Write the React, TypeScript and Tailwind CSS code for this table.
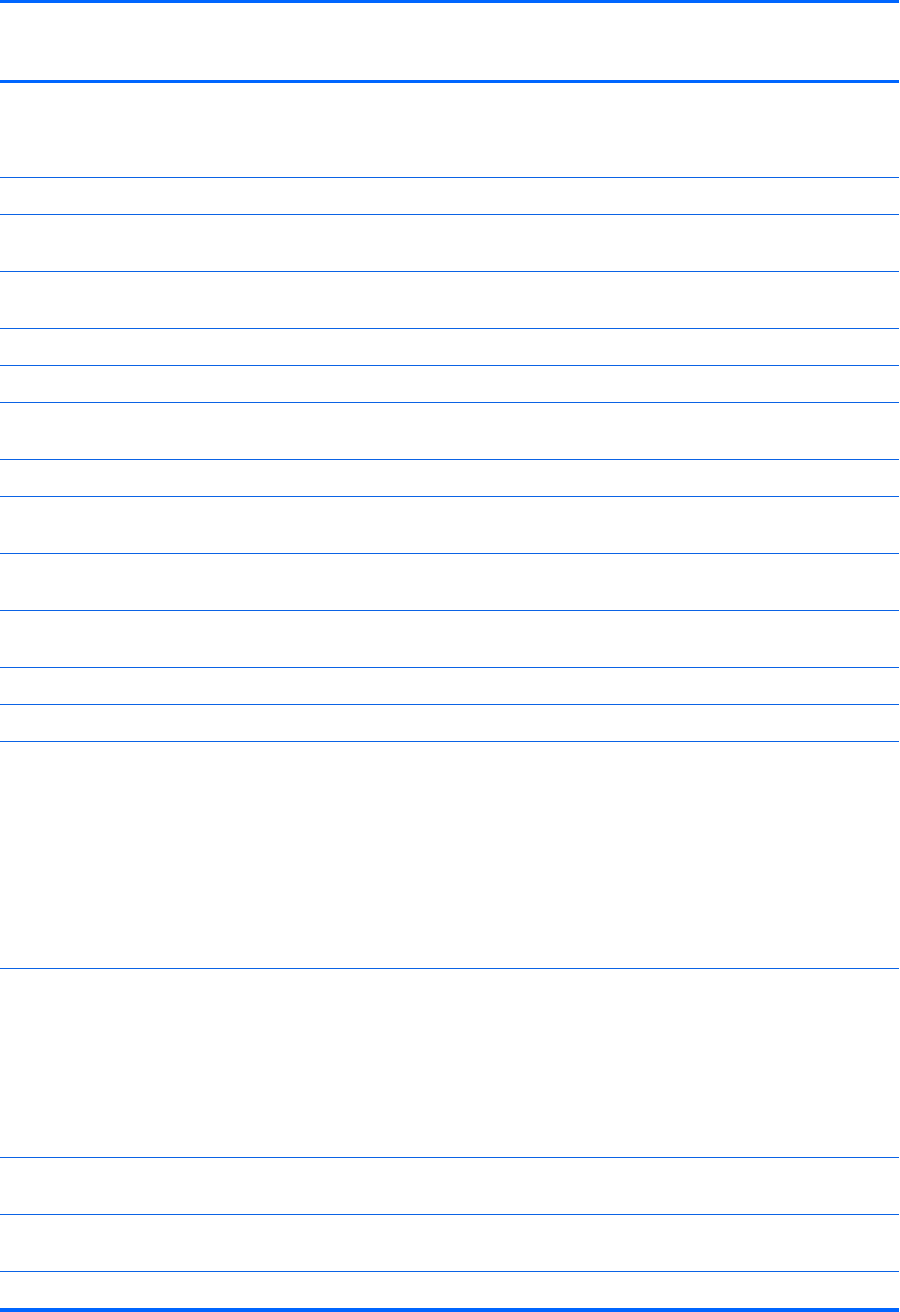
const rowHeights = [95, 37, 57, 57, 37, 37, 57, 37, 57, 57, 57, 37, 37, 227, 189, 57, 57, 36];

export default function App() {
  return (
    <div className="min-h-screen bg-white font-['Liberation_Sans',Arial,sans-serif]">
      <div className="w-[899px] border-t-[3px] border-b-4 border-[#0066ff]">
        {/* header */}
        <div className="h-[80px] border-b-[3px] border-[#0066ff]" />
        {rowHeights.map((h, i) => (
          <div
            key={i}
            className={
              i === rowHeights.length - 1
                ? "box-border"
                : "box-border border-b border-[#0b63e5]"
            }
            style={{ height: h }}
          />
        ))}
      </div>
    </div>
  );
}
